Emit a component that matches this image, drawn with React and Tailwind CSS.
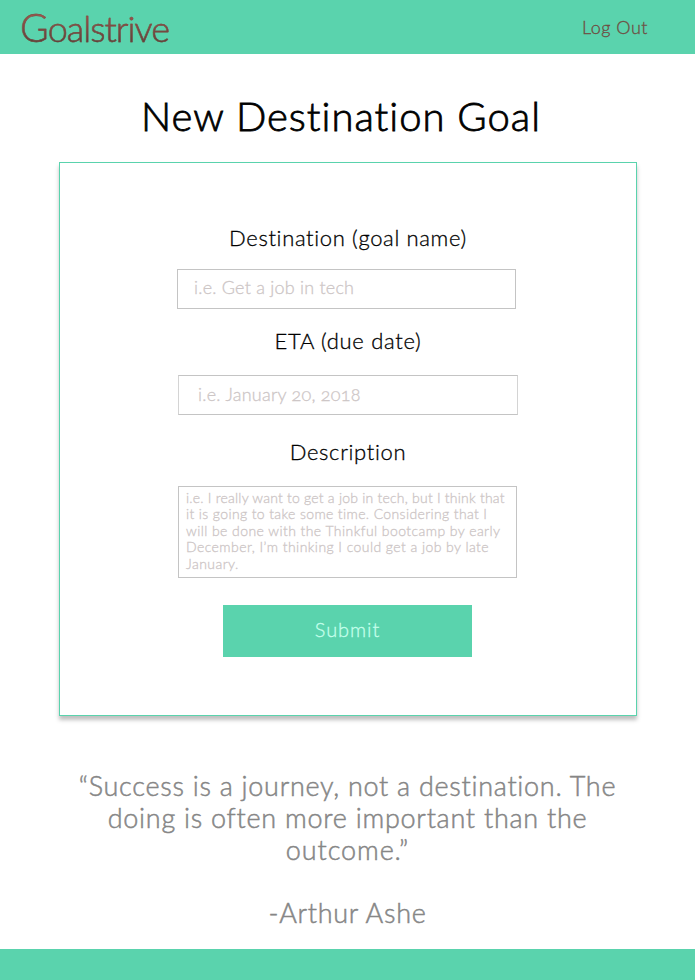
function Label({ children, className }) {
  return <label className={`block text-center text-[22px] leading-[26px] whitespace-nowrap text-black ${className}`}>{children}</label>;
}

export default function App() {
  return (
    <div className="flex h-[980px] w-[695px] flex-col overflow-hidden bg-white font-['Lato',sans-serif] font-light [font-variant-ligatures:none] [-webkit-text-stroke:0.3px]">
      <header className="flex h-[54px] shrink-0 justify-between bg-[#5ad3ad] pr-[47px] pl-5">
        <div className="mt-[5px] h-[44px] bg-linear-to-b from-[#a0564c] from-20% to-[#5c4038] to-85% bg-clip-text text-[36px] leading-[44px] tracking-[-1px] text-transparent [-webkit-text-stroke:0.4px_#754a41]">
          <span className="text-[39px]">G</span>oalstrive
        </div>
        <a className="mt-4 text-[18px] leading-[22px] tracking-[0.5px] text-[#6f4d42]">Log Out</a>
      </header>

      <h1 className="mt-[38px] pr-[13px] text-center text-[40px] leading-[48px] font-light tracking-[1px] whitespace-nowrap text-black [-webkit-text-stroke:0.8px]">
        New Destination Goal
      </h1>

      <form className="mt-[22px] ml-[59px] flex h-[554px] w-[578px] shrink-0 flex-col border border-[#5ad3ad] bg-white px-[117px] shadow-[0_4px_4px_rgba(0,0,0,0.25)]">
        <Label className="mt-[62px] tracking-[0.65px]">Destination (goal name)</Label>
        <div className="mt-[18px] h-10 w-[339px] border border-[#c4c4c4] pl-4 text-[18px] leading-[35px] tracking-[0.22px] text-[#cdc6c6]">
          i.e. Get a job in tech
        </div>
        <Label className="mt-[19px] tracking-[0.7px]">ETA (due date)</Label>
        <div className="mt-[21px] ml-px h-10 w-[340px] border border-[#c4c4c4] border-x-[#d4d4d4] pl-[19px] text-[18px] leading-[37px] tracking-[0.25px] text-[#cdc6c6] oldstyle-nums">
          i.e. January 20, 2018
        </div>
        <Label className="mt-[24px] tracking-[0.65px]">Description</Label>
        <div className="mt-[21px] ml-px h-[92px] w-[339px] border border-[#c4c4c4] pt-[3px] pl-[7px] text-[14px] leading-[16.4px] whitespace-nowrap text-[#cdc6c6]">
          <p className="tracking-[0.22px]">i.e. I really want to get a job in tech, but I think that</p>
          <p className="tracking-[0.37px]">it is going to take some time. Considering that I</p>
          <p className="tracking-[0.43px]">will be done with the Thinkful bootcamp by early</p>
          <p className="tracking-[0.43px]">December, I’m thinking I could get a job by late</p>
          <p className="tracking-[0.45px]">January.</p>
        </div>
        <button type="button" className="mt-[27px] ml-[46px] h-[52px] w-[249px] bg-[#5ad3ad] pb-1 text-[20px] leading-[48px] tracking-[0.9px] text-[#c5ffeb]">
          Submit
        </button>
      </form>

      <blockquote className="mt-[54px] flex flex-col items-center text-[27px] leading-8 whitespace-nowrap text-[#868686] [-webkit-text-stroke:0.5px]">
        <p className="tracking-[0.72px]">“Success is a journey, not a destination. The</p>
        <p className="tracking-[0.74px]">doing is often more important than the</p>
        <p className="tracking-[0.9px]">outcome.”</p>
        <cite className="mt-[31px] tracking-[0.7px] not-italic">-Arthur Ashe</cite>
      </blockquote>

      <footer className="mt-auto h-[31px] shrink-0 bg-[#5ad3ad]" />
    </div>
  );
}
